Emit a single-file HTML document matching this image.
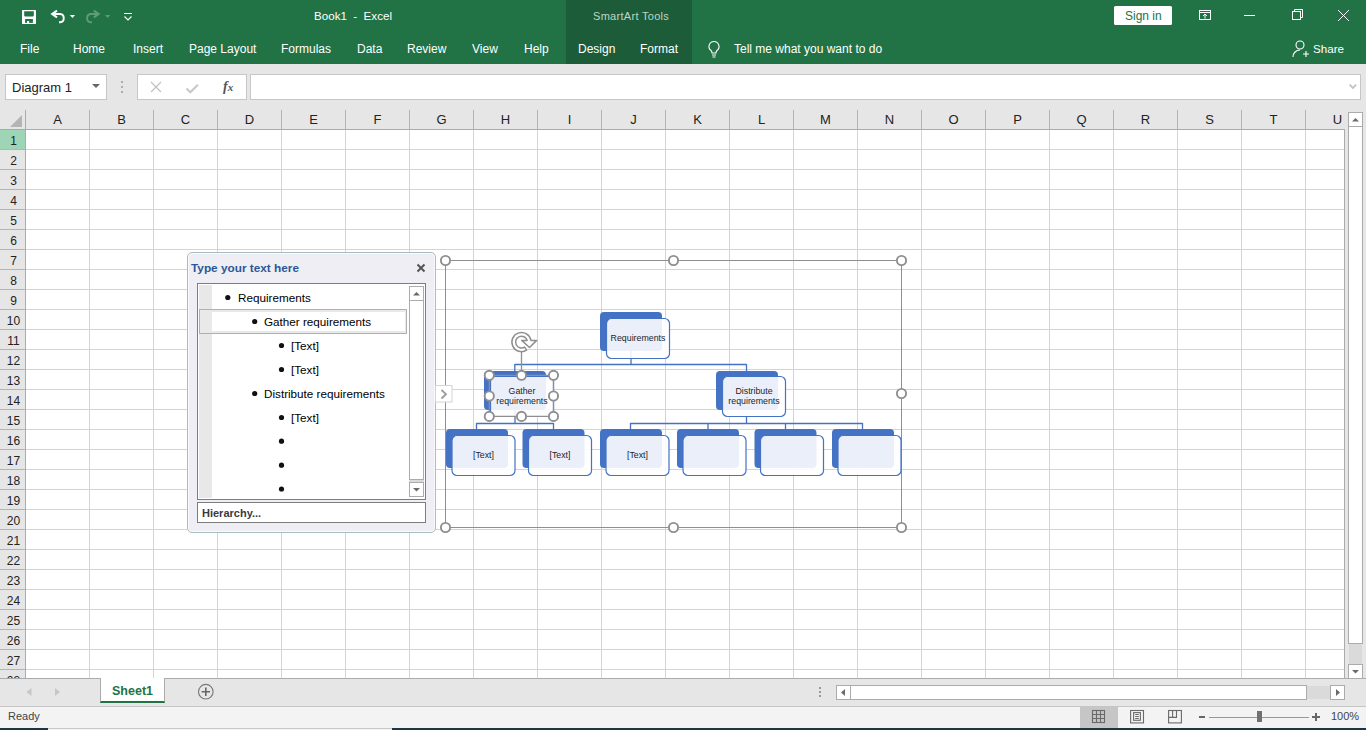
<!DOCTYPE html>
<html><head><meta charset="utf-8">
<style>
*{margin:0;padding:0;box-sizing:border-box}
html,body{width:1366px;height:730px;overflow:hidden;background:#fff;font-family:"Liberation Sans",sans-serif;position:relative}
.a{position:absolute}
.t{position:absolute;white-space:nowrap;line-height:1}
#top{left:0;top:0;width:1366px;height:64px;background:#217346}
#ctx{left:566px;top:0;width:126px;height:64px;background:#1d5c39}
.tab{position:absolute;top:43px;font-size:12px;color:#fff;white-space:nowrap;line-height:1}
#fbar{left:0;top:64px;width:1366px;height:46px;background:#e6e6e6}
#colh{left:0;top:110px;width:1366px;height:20px;background:#e6e6e6}
.ch{position:absolute;top:113px;font-size:13px;color:#222;width:64px;text-align:center;line-height:1}
.rh{position:absolute;left:0;width:25px;text-align:center;font-size:13px;color:#222;line-height:1}
#grid{left:26px;top:130px;width:1321px;height:548px;
 background-image:linear-gradient(to right, transparent 63px, #d4d4d4 63px, #d4d4d4 64px),linear-gradient(to bottom, transparent 19px,#d4d4d4 19px,#d4d4d4 20px);
 background-size:64px 20px,64px 20px;background-position:0 0,0 0}
</style></head><body>
<div id="top" class="a"></div>
<div id="ctx" class="a"></div>
<!-- QAT -->
<svg class="a" style="left:0;top:0" width="140" height="32">
 <rect x="22" y="10" width="14" height="13.9" rx="0.6" fill="#fff"/>
 <path d="M24.2 11.3H33.8V15.6Q33.8 16.4 33 16.4H25Q24.2 16.4 24.2 15.6Z" fill="#217346"/>
 <rect x="25.1" y="19" width="7.8" height="3.9" fill="#217346"/>
 <rect x="27" y="21" width="2.1" height="2" fill="#fff"/>
 <path d="M57 10.6L52.2 14L57 17.4" fill="none" stroke="#fff" stroke-width="2.1" stroke-linejoin="miter"/>
 <path d="M52.5 14H60.2A4.2 4.2 0 0 1 60.2 22.3H59" fill="none" stroke="#fff" stroke-width="1.9"/>
 <path d="M69.8 15h5.3l-2.65 3z" fill="#fff"/>
 <g transform="translate(150.85 0) scale(-1 1)">
 <path d="M57 10.6L52.2 14L57 17.4" fill="none" stroke="#5e9c79" stroke-width="2.1"/>
 <path d="M52.5 14H60.2A4.2 4.2 0 0 1 60.2 22.3H59" fill="none" stroke="#5e9c79" stroke-width="1.9"/>
 </g>
 <path d="M105 15h5.3l-2.65 3z" fill="#5e9c79"/>
 <path d="M124 13.5h8M124.5 16.5l3.5 3.5 3.5-3.5" fill="none" stroke="#fff" stroke-width="1.2"/>
</svg>
<div class="t" style="left:314px;top:10px;font-size:11.6px;color:#fff">Book1&nbsp; -&nbsp; Excel</div>
<div class="t" style="left:593px;top:11px;font-size:11px;letter-spacing:0.3px;color:#bcd6c6">SmartArt Tools</div>
<div class="a" style="left:1114px;top:6px;width:58px;height:19px;background:#fff;border-radius:1.5px"></div>
<div class="t" style="left:1125px;top:10px;font-size:12px;color:#217346">Sign in</div>
<svg class="a" style="left:1180px;top:0" width="186" height="32">
 <g fill="none" stroke="#fff" stroke-width="1">
  <rect x="19.5" y="10.5" width="11" height="9"/>
  <path d="M19.5 12.5h11M25 18.5v-4.5M23 16l2-2 2 2"/>
  <path d="M64 15.5h11"/>
  <rect x="112.5" y="11.5" width="8" height="8"/><path d="M114.5 11.5v-2h8v8h-2"/>
  <path d="M158 10l11 11M169 10l-11 11"/>
 </g>
</svg>
<!-- tabs -->
<div class="tab" style="left:20px">File</div>
<div class="tab" style="left:73px">Home</div>
<div class="tab" style="left:133px">Insert</div>
<div class="tab" style="left:189px">Page Layout</div>
<div class="tab" style="left:281px">Formulas</div>
<div class="tab" style="left:357px">Data</div>
<div class="tab" style="left:407px">Review</div>
<div class="tab" style="left:472px">View</div>
<div class="tab" style="left:524px">Help</div>
<div class="tab" style="left:578px">Design</div>
<div class="tab" style="left:640px">Format</div>
<svg class="a" style="left:704px;top:38px" width="20" height="22">
 <path d="M10 3.5a5 5 0 0 0-3 9c.8.7 1 1.5 1 2.5h4c0-1 .2-1.8 1-2.5a5 5 0 0 0-3-9zM8 17h4M8.5 19h3" fill="none" stroke="#fff" stroke-width="1.1"/>
</svg>
<div class="tab" style="left:734px">Tell me what you want to do</div>
<svg class="a" style="left:1290px;top:38px" width="22" height="22">
 <circle cx="10" cy="7" r="4" fill="none" stroke="#fff" stroke-width="1.1"/>
 <path d="M3 19c0-4 3-7 7-7M13 16h6M16 13v6" fill="none" stroke="#fff" stroke-width="1.1"/>
</svg>
<div class="tab" style="left:1313px;font-size:11.6px">Share</div>

<!-- formula bar -->
<div id="fbar" class="a"></div>
<div class="a" style="left:5px;top:74px;width:102px;height:26px;background:#fff;border:1px solid #c6c6c6"></div>
<div class="t" style="left:12px;top:81px;font-size:13px;color:#222">Diagram 1</div>
<svg class="a" style="left:90px;top:82px" width="12" height="10"><path d="M2 2h8l-4 4z" fill="#666"/></svg>
<svg class="a" style="left:118px;top:80px" width="8" height="14"><g fill="#999"><circle cx="4" cy="2" r="1"/><circle cx="4" cy="7" r="1"/><circle cx="4" cy="12" r="1"/></g></svg>
<div class="a" style="left:137px;top:74px;width:110px;height:26px;background:#fff;border:1px solid #c6c6c6"></div>
<svg class="a" style="left:140px;top:76px" width="100" height="22">
 <path d="M11 6l10 10M21 6l-10 10" stroke="#c0c0c0" stroke-width="1.2" fill="none"/>
 <path d="M46.5 12.5l3.8 3.8 7.6-7.6" stroke="#c8c8c8" stroke-width="2.1" fill="none"/>
</svg>
<div class="t" style="left:223px;top:80px;font-size:14px;color:#555;font-weight:bold;font-style:italic;font-family:'Liberation Serif',serif">f<span style="font-size:11px">x</span></div>
<div class="a" style="left:250px;top:74px;width:1111px;height:26px;background:#fff;border:1px solid #c6c6c6"></div>
<svg class="a" style="left:1345px;top:82px" width="14" height="10"><path d="M4.6 2.6l3.3 3.4 3.3-3.4" stroke="#c4c4c4" stroke-width="1.8" fill="none"/></svg>

<!-- headers -->
<div id="colh" class="a"></div>
<div class="a" style="left:0;top:129px;width:1347px;height:1px;background:#ababab"></div>
<div class="a" style="left:0;top:130px;width:25px;height:548px;background:#e6e6e6"></div>
<div class="a" style="left:25px;top:110px;width:1px;height:568px;background:#ababab"></div>
<svg class="a" style="left:0;top:110px" width="26" height="20"><path d="M10 17h12v-12z" fill="#b4b4b4"/></svg>
<div id="grid" class="a"></div>
<!--HDR-->
<div class="t" style="left:37.5px;top:113px;width:40px;text-align:center;font-size:13px;color:#222">A</div>
<div class="a" style="left:89px;top:110px;width:1px;height:19px;background:#b4b4b4"></div>
<div class="t" style="left:101.5px;top:113px;width:40px;text-align:center;font-size:13px;color:#222">B</div>
<div class="a" style="left:153px;top:110px;width:1px;height:19px;background:#b4b4b4"></div>
<div class="t" style="left:165.5px;top:113px;width:40px;text-align:center;font-size:13px;color:#222">C</div>
<div class="a" style="left:217px;top:110px;width:1px;height:19px;background:#b4b4b4"></div>
<div class="t" style="left:229.5px;top:113px;width:40px;text-align:center;font-size:13px;color:#222">D</div>
<div class="a" style="left:281px;top:110px;width:1px;height:19px;background:#b4b4b4"></div>
<div class="t" style="left:293.5px;top:113px;width:40px;text-align:center;font-size:13px;color:#222">E</div>
<div class="a" style="left:345px;top:110px;width:1px;height:19px;background:#b4b4b4"></div>
<div class="t" style="left:357.5px;top:113px;width:40px;text-align:center;font-size:13px;color:#222">F</div>
<div class="a" style="left:409px;top:110px;width:1px;height:19px;background:#b4b4b4"></div>
<div class="t" style="left:421.5px;top:113px;width:40px;text-align:center;font-size:13px;color:#222">G</div>
<div class="a" style="left:473px;top:110px;width:1px;height:19px;background:#b4b4b4"></div>
<div class="t" style="left:485.5px;top:113px;width:40px;text-align:center;font-size:13px;color:#222">H</div>
<div class="a" style="left:537px;top:110px;width:1px;height:19px;background:#b4b4b4"></div>
<div class="t" style="left:549.5px;top:113px;width:40px;text-align:center;font-size:13px;color:#222">I</div>
<div class="a" style="left:601px;top:110px;width:1px;height:19px;background:#b4b4b4"></div>
<div class="t" style="left:613.5px;top:113px;width:40px;text-align:center;font-size:13px;color:#222">J</div>
<div class="a" style="left:665px;top:110px;width:1px;height:19px;background:#b4b4b4"></div>
<div class="t" style="left:677.5px;top:113px;width:40px;text-align:center;font-size:13px;color:#222">K</div>
<div class="a" style="left:729px;top:110px;width:1px;height:19px;background:#b4b4b4"></div>
<div class="t" style="left:741.5px;top:113px;width:40px;text-align:center;font-size:13px;color:#222">L</div>
<div class="a" style="left:793px;top:110px;width:1px;height:19px;background:#b4b4b4"></div>
<div class="t" style="left:805.5px;top:113px;width:40px;text-align:center;font-size:13px;color:#222">M</div>
<div class="a" style="left:857px;top:110px;width:1px;height:19px;background:#b4b4b4"></div>
<div class="t" style="left:869.5px;top:113px;width:40px;text-align:center;font-size:13px;color:#222">N</div>
<div class="a" style="left:921px;top:110px;width:1px;height:19px;background:#b4b4b4"></div>
<div class="t" style="left:933.5px;top:113px;width:40px;text-align:center;font-size:13px;color:#222">O</div>
<div class="a" style="left:985px;top:110px;width:1px;height:19px;background:#b4b4b4"></div>
<div class="t" style="left:997.5px;top:113px;width:40px;text-align:center;font-size:13px;color:#222">P</div>
<div class="a" style="left:1049px;top:110px;width:1px;height:19px;background:#b4b4b4"></div>
<div class="t" style="left:1061.5px;top:113px;width:40px;text-align:center;font-size:13px;color:#222">Q</div>
<div class="a" style="left:1113px;top:110px;width:1px;height:19px;background:#b4b4b4"></div>
<div class="t" style="left:1125.5px;top:113px;width:40px;text-align:center;font-size:13px;color:#222">R</div>
<div class="a" style="left:1177px;top:110px;width:1px;height:19px;background:#b4b4b4"></div>
<div class="t" style="left:1189.5px;top:113px;width:40px;text-align:center;font-size:13px;color:#222">S</div>
<div class="a" style="left:1241px;top:110px;width:1px;height:19px;background:#b4b4b4"></div>
<div class="t" style="left:1253.5px;top:113px;width:40px;text-align:center;font-size:13px;color:#222">T</div>
<div class="a" style="left:1305px;top:110px;width:1px;height:19px;background:#b4b4b4"></div>
<div class="t" style="left:1317.5px;top:113px;width:40px;text-align:center;font-size:13px;color:#222">U</div>
<div class="t" style="left:1px;top:134.5px;width:25px;text-align:center;font-size:12px;color:#222">1</div>
<div class="a" style="left:0;top:149px;width:25px;height:1px;background:#b4b4b4"></div>
<div class="t" style="left:1px;top:154.5px;width:25px;text-align:center;font-size:12px;color:#222">2</div>
<div class="a" style="left:0;top:169px;width:25px;height:1px;background:#b4b4b4"></div>
<div class="t" style="left:1px;top:174.5px;width:25px;text-align:center;font-size:12px;color:#222">3</div>
<div class="a" style="left:0;top:189px;width:25px;height:1px;background:#b4b4b4"></div>
<div class="t" style="left:1px;top:194.5px;width:25px;text-align:center;font-size:12px;color:#222">4</div>
<div class="a" style="left:0;top:209px;width:25px;height:1px;background:#b4b4b4"></div>
<div class="t" style="left:1px;top:214.5px;width:25px;text-align:center;font-size:12px;color:#222">5</div>
<div class="a" style="left:0;top:229px;width:25px;height:1px;background:#b4b4b4"></div>
<div class="t" style="left:1px;top:234.5px;width:25px;text-align:center;font-size:12px;color:#222">6</div>
<div class="a" style="left:0;top:249px;width:25px;height:1px;background:#b4b4b4"></div>
<div class="t" style="left:1px;top:254.5px;width:25px;text-align:center;font-size:12px;color:#222">7</div>
<div class="a" style="left:0;top:269px;width:25px;height:1px;background:#b4b4b4"></div>
<div class="t" style="left:1px;top:274.5px;width:25px;text-align:center;font-size:12px;color:#222">8</div>
<div class="a" style="left:0;top:289px;width:25px;height:1px;background:#b4b4b4"></div>
<div class="t" style="left:1px;top:294.5px;width:25px;text-align:center;font-size:12px;color:#222">9</div>
<div class="a" style="left:0;top:309px;width:25px;height:1px;background:#b4b4b4"></div>
<div class="t" style="left:1px;top:314.5px;width:25px;text-align:center;font-size:12px;color:#222">10</div>
<div class="a" style="left:0;top:329px;width:25px;height:1px;background:#b4b4b4"></div>
<div class="t" style="left:1px;top:334.5px;width:25px;text-align:center;font-size:12px;color:#222">11</div>
<div class="a" style="left:0;top:349px;width:25px;height:1px;background:#b4b4b4"></div>
<div class="t" style="left:1px;top:354.5px;width:25px;text-align:center;font-size:12px;color:#222">12</div>
<div class="a" style="left:0;top:369px;width:25px;height:1px;background:#b4b4b4"></div>
<div class="t" style="left:1px;top:374.5px;width:25px;text-align:center;font-size:12px;color:#222">13</div>
<div class="a" style="left:0;top:389px;width:25px;height:1px;background:#b4b4b4"></div>
<div class="t" style="left:1px;top:394.5px;width:25px;text-align:center;font-size:12px;color:#222">14</div>
<div class="a" style="left:0;top:409px;width:25px;height:1px;background:#b4b4b4"></div>
<div class="t" style="left:1px;top:414.5px;width:25px;text-align:center;font-size:12px;color:#222">15</div>
<div class="a" style="left:0;top:429px;width:25px;height:1px;background:#b4b4b4"></div>
<div class="t" style="left:1px;top:434.5px;width:25px;text-align:center;font-size:12px;color:#222">16</div>
<div class="a" style="left:0;top:449px;width:25px;height:1px;background:#b4b4b4"></div>
<div class="t" style="left:1px;top:454.5px;width:25px;text-align:center;font-size:12px;color:#222">17</div>
<div class="a" style="left:0;top:469px;width:25px;height:1px;background:#b4b4b4"></div>
<div class="t" style="left:1px;top:474.5px;width:25px;text-align:center;font-size:12px;color:#222">18</div>
<div class="a" style="left:0;top:489px;width:25px;height:1px;background:#b4b4b4"></div>
<div class="t" style="left:1px;top:494.5px;width:25px;text-align:center;font-size:12px;color:#222">19</div>
<div class="a" style="left:0;top:509px;width:25px;height:1px;background:#b4b4b4"></div>
<div class="t" style="left:1px;top:514.5px;width:25px;text-align:center;font-size:12px;color:#222">20</div>
<div class="a" style="left:0;top:529px;width:25px;height:1px;background:#b4b4b4"></div>
<div class="t" style="left:1px;top:534.5px;width:25px;text-align:center;font-size:12px;color:#222">21</div>
<div class="a" style="left:0;top:549px;width:25px;height:1px;background:#b4b4b4"></div>
<div class="t" style="left:1px;top:554.5px;width:25px;text-align:center;font-size:12px;color:#222">22</div>
<div class="a" style="left:0;top:569px;width:25px;height:1px;background:#b4b4b4"></div>
<div class="t" style="left:1px;top:574.5px;width:25px;text-align:center;font-size:12px;color:#222">23</div>
<div class="a" style="left:0;top:589px;width:25px;height:1px;background:#b4b4b4"></div>
<div class="t" style="left:1px;top:594.5px;width:25px;text-align:center;font-size:12px;color:#222">24</div>
<div class="a" style="left:0;top:609px;width:25px;height:1px;background:#b4b4b4"></div>
<div class="t" style="left:1px;top:614.5px;width:25px;text-align:center;font-size:12px;color:#222">25</div>
<div class="a" style="left:0;top:629px;width:25px;height:1px;background:#b4b4b4"></div>
<div class="t" style="left:1px;top:634.5px;width:25px;text-align:center;font-size:12px;color:#222">26</div>
<div class="a" style="left:0;top:649px;width:25px;height:1px;background:#b4b4b4"></div>
<div class="t" style="left:1px;top:654.5px;width:25px;text-align:center;font-size:12px;color:#222">27</div>
<div class="a" style="left:0;top:669px;width:25px;height:1px;background:#b4b4b4"></div>
<div class="t" style="left:1px;top:674.5px;width:25px;text-align:center;font-size:12px;color:#222">28</div>
<div class="a" style="left:0;top:689px;width:25px;height:1px;background:#b4b4b4"></div>
<!--/HDR-->

<!-- row1 highlight -->
<div class="a" style="left:0;top:130px;width:25px;height:19px;background:#9fd5b7"></div>
<div class="t" style="left:1px;top:134.5px;width:25px;text-align:center;font-size:12px;color:#222">1</div>
<!-- grid borders -->
<div class="a" style="left:1344px;top:129px;width:1px;height:550px;background:#ababab"></div>
<div class="a" style="left:1345px;top:110px;width:21px;height:568px;background:#e6e6e6"></div>
<div class="a" style="left:1305px;top:110px;width:1px;height:19px;background:#b4b4b4"></div>
<!-- vscroll -->
<div class="a" style="left:1348px;top:112px;width:15px;height:15px;background:#fff;border:1px solid #ababab"></div>
<svg class="a" style="left:1348px;top:112px" width="15" height="15"><path d="M4 9.5h7l-3.5-3.5z" fill="#6a6a6a"/></svg>
<div class="a" style="left:1348px;top:126px;width:15px;height:518px;background:#fff;border:1px solid #ababab"></div>
<div class="a" style="left:1349px;top:644px;width:13px;height:20px;background:#dadada"></div>
<div class="a" style="left:1348px;top:664px;width:15px;height:15px;background:#fff;border:1px solid #ababab"></div>
<svg class="a" style="left:1348px;top:664px" width="15" height="15"><path d="M4 6h7l-3.5 3.5z" fill="#6a6a6a"/></svg>
<!-- tab bar -->
<div class="a" style="left:0;top:678px;width:1366px;height:28px;background:#e6e6e6;border-top:1px solid #ababab"></div>
<svg class="a" style="left:20px;top:684px" width="50" height="16"><path d="M6.5 8l5-4v8z" fill="#c6c6c6"/><path d="M40 8l-5-4v8z" fill="#c6c6c6"/></svg>
<div class="a" style="left:100px;top:678px;width:65px;height:25px;background:#fff;border-left:1px solid #ababab;border-right:1px solid #ababab;border-bottom:2px solid #217346"></div>
<div class="t" style="left:112px;top:685px;font-size:12.5px;font-weight:bold;color:#217346">Sheet1</div>
<svg class="a" style="left:196px;top:682px" width="20" height="20"><circle cx="9.8" cy="9.7" r="7.3" fill="none" stroke="#777" stroke-width="1.1"/><path d="M9.8 5.5v8.4M5.6 9.7h8.4" stroke="#666" stroke-width="1.6"/></svg>
<svg class="a" style="left:814px;top:684px" width="12" height="16"><g fill="#999"><rect x="5" y="3" width="2" height="2"/><rect x="5" y="7" width="2" height="2"/><rect x="5" y="11" width="2" height="2"/></g></svg>
<div class="a" style="left:836px;top:685px;width:15px;height:15px;background:#fff;border:1px solid #ababab"></div>
<svg class="a" style="left:836px;top:685px" width="15" height="15"><path d="M5 7.5l4-3.5v7z" fill="#6a6a6a"/></svg>
<div class="a" style="left:850px;top:685px;width:457px;height:15px;background:#fff;border:1px solid #ababab"></div>
<div class="a" style="left:1307px;top:686px;width:23px;height:13px;background:#dadada"></div>
<div class="a" style="left:1330px;top:685px;width:15px;height:15px;background:#fff;border:1px solid #ababab"></div>
<svg class="a" style="left:1330px;top:685px" width="15" height="15"><path d="M10 7.5l-4-3.5v7z" fill="#6a6a6a"/></svg>
<!-- status bar -->
<div class="a" style="left:0;top:706px;width:1366px;height:24px;background:#f3f3f3;border-top:1px solid #c6c6c6"></div>
<div class="t" style="left:8px;top:711px;font-size:11px;color:#444">Ready</div>
<div class="a" style="left:1080px;top:707px;width:38px;height:21px;background:#c6c6c6"></div>
<svg class="a" style="left:1080px;top:706px" width="120" height="22">
 <g fill="none" stroke="#6a6a6a" stroke-width="1.1">
  <rect x="12.5" y="4.5" width="12" height="12"/><path d="M16.5 4.5v12M20.5 4.5v12M12.5 8.5h12M12.5 12.5h12"/>
  <rect x="50.6" y="4.5" width="12.9" height="12.4"/><rect x="53.6" y="6.6" width="6.8" height="7.7"/><path d="M55.2 8.5h3.6M55.2 10.5h3.6M55.2 12.5h3.6"/>
  <rect x="88.6" y="4.5" width="12.8" height="12.4"/><path d="M88.6 11.4H96.5V4.5M92.6 4.5V11.4"/>
 </g>
</svg>
<div class="a" style="left:1199px;top:716px;width:6px;height:2px;background:#666"></div>
<div class="a" style="left:1209px;top:717px;width:100px;height:1px;background:#999"></div>
<div class="a" style="left:1257px;top:711px;width:5px;height:11px;background:#707070"></div>
<div class="a" style="left:1312px;top:716px;width:8px;height:2px;background:#666"></div>
<div class="a" style="left:1315px;top:713px;width:2px;height:8px;background:#666"></div>
<div class="t" style="left:1331px;top:711px;font-size:11px;color:#444">100%</div>
<div class="a" style="left:48px;top:728px;width:344px;height:1px;background:#c8c8c8"></div>
<div class="a" style="left:0;top:728px;width:48px;height:2px;background:#1f3440"></div>
<div class="a" style="left:392px;top:728px;width:974px;height:2px;background:#1f3440"></div>


<!-- text pane -->
<div class="a" style="left:187px;top:252px;width:249px;height:281px;background:#eeeef4;border:1px solid #a9bdc0;border-radius:5px;box-shadow:inset 0 0 0 1px #fafafc"></div>
<div class="t" style="left:191px;top:262.5px;font-size:11.8px;font-weight:bold;color:#2b5797">Type your text here</div>
<svg class="a" style="left:414px;top:261px" width="14" height="14"><path d="M3.5 3.5l7 7M10.5 3.5l-7 7" stroke="#555" stroke-width="2"/></svg>
<div class="a" style="left:197px;top:283px;width:229px;height:217px;background:#fff;border:1px solid #7d7d7d"></div>
<div class="a" style="left:199px;top:285px;width:13px;height:213px;background:#e8e8e8"></div>
<div class="a" style="left:199px;top:309px;width:208px;height:25px;border:1px solid #b0b0b0;background:#e9e9e9"></div>
<div class="a" style="left:212px;top:312px;width:193px;height:19px;background:#fff"></div>
<div class="a" style="left:409px;top:286px;width:15px;height:211px;background:#dadada"></div>
<div class="a" style="left:409px;top:286px;width:15px;height:15px;background:#fff;border:1px solid #ababab"></div>
<svg class="a" style="left:409px;top:286px" width="15" height="15"><path d="M4 9.5h7l-3.5-3.5z" fill="#6a6a6a"/></svg>
<div class="a" style="left:409px;top:300px;width:15px;height:180px;background:#fff;border:1px solid #ababab"></div>
<div class="a" style="left:409px;top:482px;width:15px;height:15px;background:#fff;border:1px solid #ababab"></div>
<svg class="a" style="left:409px;top:482px" width="15" height="15"><path d="M4 6h7l-3.5 3.5z" fill="#6a6a6a"/></svg>
<svg class="a" style="left:197px;top:283px" width="215" height="217"><g fill="#111">
<circle cx="30.8" cy="14.5" r="2.6"/><circle cx="57.7" cy="38.5" r="2.6"/><circle cx="84.5" cy="62.5" r="2.6"/><circle cx="84.5" cy="86.5" r="2.6"/>
<circle cx="57.7" cy="110.5" r="2.6"/><circle cx="84.5" cy="134.5" r="2.6"/><circle cx="84.5" cy="158.2" r="2.6"/><circle cx="84.5" cy="182.2" r="2.6"/><circle cx="84.5" cy="206" r="2.6"/>
</g></svg>
<div class="t" style="left:238px;top:291.5px;font-size:11.7px;color:#000">Requirements</div>
<div class="t" style="left:264px;top:315.5px;font-size:11.7px;color:#000">Gather requirements</div>
<div class="t" style="left:291px;top:339.5px;font-size:11.7px;color:#000">[Text]</div>
<div class="t" style="left:291px;top:363.5px;font-size:11.7px;color:#000">[Text]</div>
<div class="t" style="left:264px;top:387.5px;font-size:11.7px;color:#000">Distribute requirements</div>
<div class="t" style="left:291px;top:411.5px;font-size:11.7px;color:#000">[Text]</div>
<div class="a" style="left:197px;top:502px;width:229px;height:21px;background:#fff;border:1px solid #7d7d7d"></div>
<div class="t" style="left:202px;top:508px;font-size:11px;font-weight:bold;color:#3a3a3a">Hierarchy...</div>

<!--ART--><svg class="a" style="left:0;top:0" width="1366" height="730" font-family="Liberation Sans" font-size="8.8" fill="#1e1e1e">
<g stroke="#8f8f8f" stroke-width="1" fill="none"><path d="M445.5 260.5H901.5V527.5H445.5Z"/></g>
<g stroke="#4472c4" stroke-width="1.3" fill="none"><path d="M631 351V364.5M514.8 364.5H746.5M514.8 364V371M746.5 364V371"/><path d="M515 410V423.5M476.5 423.5H553.5M476.5 423V429M553.5 423V429"/><path d="M746.5 416V423.5M630.5 423.5H862.5M630.5 423V429M708 423V429M785.5 423V429M862.5 423V429"/></g>
<rect x="600" y="312" width="62" height="39" rx="4" fill="#4472c4"/><rect x="606.5" y="318.5" width="63" height="40" rx="5" fill="#fff" fill-opacity="0.89" stroke="#4472c4" stroke-width="1.2"/><text x="638.0" y="341.2" text-anchor="middle">Requirements</text>
<rect x="484" y="371" width="62" height="39" rx="4" fill="#4472c4"/><rect x="490.5" y="376.5" width="63" height="40" rx="5" fill="#fff" fill-opacity="0.89" stroke="#4472c4" stroke-width="1.2"/><text x="522.0" y="394.4" text-anchor="middle">Gather</text><text x="522.0" y="404.4" text-anchor="middle">requirements</text>
<rect x="716" y="371" width="62" height="39" rx="4" fill="#4472c4"/><rect x="722.5" y="376.5" width="63" height="40" rx="5" fill="#fff" fill-opacity="0.89" stroke="#4472c4" stroke-width="1.2"/><text x="754.0" y="394.4" text-anchor="middle">Distribute</text><text x="754.0" y="404.4" text-anchor="middle">requirements</text>
<rect x="446" y="429" width="62" height="39" rx="4" fill="#4472c4"/><rect x="452" y="435.5" width="63" height="40" rx="5" fill="#fff" fill-opacity="0.89" stroke="#4472c4" stroke-width="1.2"/><text x="483.5" y="458.2" text-anchor="middle">[Text]</text>
<rect x="522.5" y="429" width="62" height="39" rx="4" fill="#4472c4"/><rect x="528.5" y="435.5" width="63" height="40" rx="5" fill="#fff" fill-opacity="0.89" stroke="#4472c4" stroke-width="1.2"/><text x="560.0" y="458.2" text-anchor="middle">[Text]</text>
<rect x="600" y="429" width="62" height="39" rx="4" fill="#4472c4"/><rect x="606" y="435.5" width="63" height="40" rx="5" fill="#fff" fill-opacity="0.89" stroke="#4472c4" stroke-width="1.2"/><text x="637.5" y="458.2" text-anchor="middle">[Text]</text>
<rect x="677" y="429" width="62" height="39" rx="4" fill="#4472c4"/><rect x="683" y="435.5" width="63" height="40" rx="5" fill="#fff" fill-opacity="0.89" stroke="#4472c4" stroke-width="1.2"/>
<rect x="754.5" y="429" width="62" height="39" rx="4" fill="#4472c4"/><rect x="760.5" y="435.5" width="63" height="40" rx="5" fill="#fff" fill-opacity="0.89" stroke="#4472c4" stroke-width="1.2"/>
<rect x="832" y="429" width="62" height="39" rx="4" fill="#4472c4"/><rect x="838" y="435.5" width="63" height="40" rx="5" fill="#fff" fill-opacity="0.89" stroke="#4472c4" stroke-width="1.2"/>
<g stroke="#8f8f8f" stroke-width="1.3" fill="none"><path d="M489.3 375.3H553.5V416.4H489.3Z"/><path d="M521.5 352V370"/></g>
<g fill="#fff" stroke="#8f8f8f" stroke-width="1.9"><circle cx="445.5" cy="260.5" r="4.6"/><circle cx="673.5" cy="260.5" r="4.6"/><circle cx="901.5" cy="260.5" r="4.6"/><circle cx="445.5" cy="393.5" r="4.6"/><circle cx="901.5" cy="393.5" r="4.6"/><circle cx="445.5" cy="527.5" r="4.6"/><circle cx="673.5" cy="527.5" r="4.6"/><circle cx="901.5" cy="527.5" r="4.6"/><circle cx="489.3" cy="375.3" r="4.6"/><circle cx="521.5" cy="375.3" r="4.6"/><circle cx="553.5" cy="375.3" r="4.6"/><circle cx="489.3" cy="396" r="4.6"/><circle cx="553.5" cy="396" r="4.6"/><circle cx="489.3" cy="416.4" r="4.6"/><circle cx="521.5" cy="416.4" r="4.6"/><circle cx="553.5" cy="416.4" r="4.6"/></g>
<path transform="translate(0.5 0)" d="M530.45 340.4L536.2 340.4L529 347.5L521.2 340.4L526.65 340.4A5.9 5.9 0 1 0 524.1 347.1L526.1 350.2A9.6 9.6 0 1 1 530.45 340.4Z" fill="#fff" stroke="#8f8f8f" stroke-width="1.5" stroke-linejoin="round"/>
<rect x="435.5" y="385.5" width="16.5" height="16.5" fill="#fff" stroke="#d4d4d4" stroke-width="1"/><path d="M441.5 390L446 394.2L441.5 398.5" fill="none" stroke="#9a9a9a" stroke-width="1.8"/>
</svg><!--/ART-->
</body></html>
